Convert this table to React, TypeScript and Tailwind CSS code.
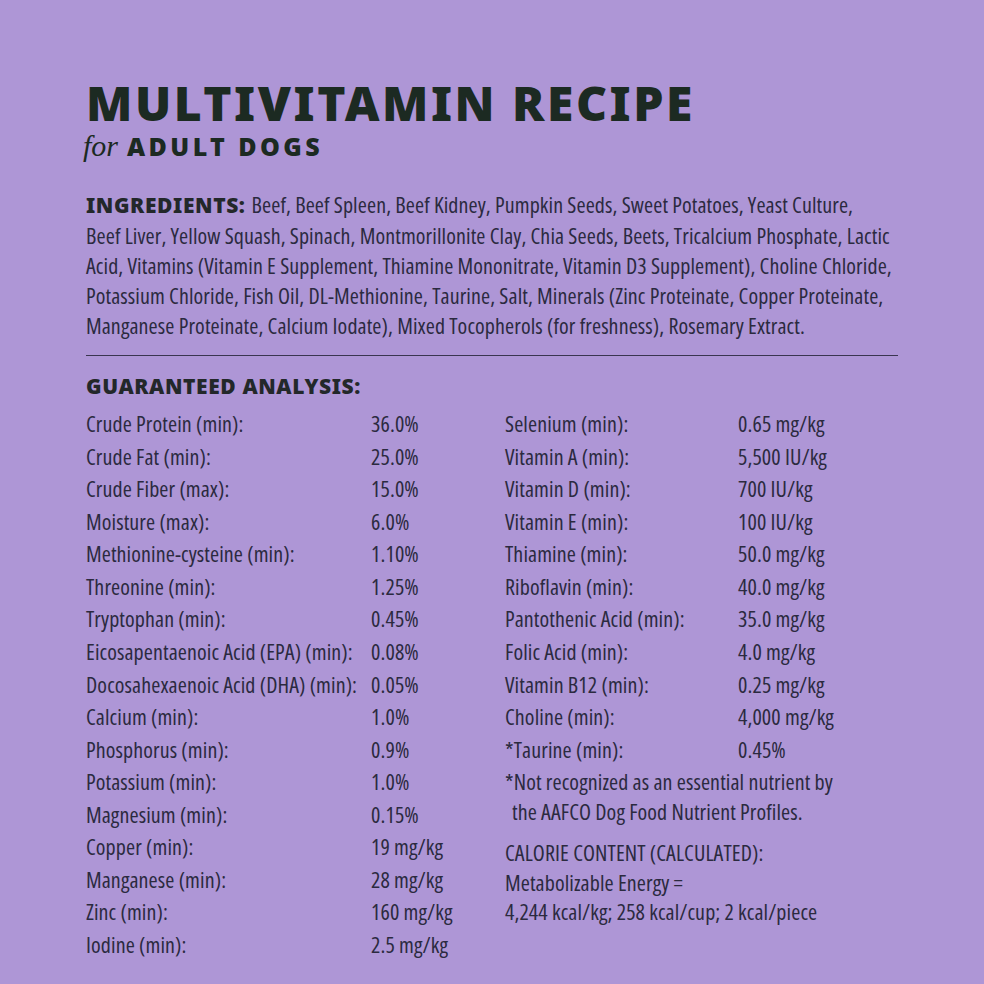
const ingredientLines = [
	'Beef Liver, Yellow Squash, Spinach, Montmorillonite Clay, Chia Seeds, Beets, Tricalcium Phosphate, Lactic',
	'Acid, Vitamins (Vitamin E Supplement, Thiamine Mononitrate, Vitamin D3 Supplement), Choline Chloride,',
	'Potassium Chloride, Fish Oil, DL-Methionine, Taurine, Salt, Minerals (Zinc Proteinate, Copper Proteinate,',
	'Manganese Proteinate, Calcium Iodate), Mixed Tocopherols (for freshness), Rosemary Extract.',
];

const leftRows: [string, string][] = [
	['Crude Protein (min):', '36.0%'],
	['Crude Fat (min):', '25.0%'],
	['Crude Fiber (max):', '15.0%'],
	['Moisture (max):', '6.0%'],
	['Methionine-cysteine (min):', '1.10%'],
	['Threonine (min):', '1.25%'],
	['Tryptophan (min):', '0.45%'],
	['Eicosapentaenoic Acid (EPA) (min):', '0.08%'],
	['Docosahexaenoic Acid (DHA) (min):', '0.05%'],
	['Calcium (min):', '1.0%'],
	['Phosphorus (min):', '0.9%'],
	['Potassium (min):', '1.0%'],
	['Magnesium (min):', '0.15%'],
	['Copper (min):', '19 mg/kg'],
	['Manganese (min):', '28 mg/kg'],
	['Zinc (min):', '160 mg/kg'],
	['Iodine (min):', '2.5 mg/kg'],
];

const rightRows: [string, string][] = [
	['Selenium (min):', '0.65 mg/kg'],
	['Vitamin A (min):', '5,500 IU/kg'],
	['Vitamin D (min):', '700 IU/kg'],
	['Vitamin E (min):', '100 IU/kg'],
	['Thiamine (min):', '50.0 mg/kg'],
	['Riboflavin (min):', '40.0 mg/kg'],
	['Pantothenic Acid (min):', '35.0 mg/kg'],
	['Folic Acid (min):', '4.0 mg/kg'],
	['Vitamin B12 (min):', '0.25 mg/kg'],
	['Choline (min):', '4,000 mg/kg'],
	['*Taurine (min):', '0.45%'],
];

// condensed body face: Open Sans variable, squeezed on its width axis
const body = "font-['Open_Sans',sans-serif] [font-stretch:75%] font-medium tracking-[0.1px]";
const heading = "font-['Noto_Sans',sans-serif] font-black [font-stretch:normal]";

function Rows({ rows, labelWidth }: { rows: [string, string][]; labelWidth: string }) {
	return (
		<div className={`grid ${labelWidth}`}>
			{rows.map(([label, value]) => (
				<div key={label} className="contents">
					<span className="whitespace-nowrap">{label}</span>
					<span className="whitespace-nowrap">{value}</span>
				</div>
			))}
		</div>
	);
}

export default function App() {
	return (
		<div className="min-h-screen w-[984px] bg-[#ae96d6] text-[#2b2a3f]">
			<div className="px-[86px] pt-[77px]">
				<h1 className={`${heading} text-[48px] leading-[52px] tracking-[2.5px] text-[#1c2a22]`}>
					MULTIVITAMIN RECIPE
				</h1>
				<div className="-ml-[3px] mt-[2px] flex h-[30px] items-baseline gap-[9px] text-[#1c2a22]">
					<span className="font-['Liberation_Serif',serif] text-[30px] leading-[30px] italic">for</span>
					<span className={`${heading} text-[25px] leading-[30px] tracking-[3.4px]`}>ADULT DOGS</span>
				</div>

				<div className={`${body} mt-[28px] text-[22px] leading-[30px] whitespace-nowrap`}>
					<div>
						<span className={`${heading} text-[21px] tracking-[0.6px] text-[#23282a]`}>INGREDIENTS: </span>
						Beef, Beef Spleen, Beef Kidney, Pumpkin Seeds, Sweet Potatoes, Yeast Culture,
					</div>
					{ingredientLines.map((line) => (
						<div key={line}>{line}</div>
					))}
				</div>

				<div className="mt-[15px] h-px w-[812px] bg-[#3a3550]" />

				<h2 className={`${heading} mt-[15px] text-[21px] leading-[30px] tracking-[0.6px] text-[#23282a]`}>
					GUARANTEED ANALYSIS:
				</h2>

				<div className={`${body} mt-[6px] flex text-[22px] leading-[32.56px]`}>
					<div className="w-[419px] shrink-0">
						<Rows rows={leftRows} labelWidth="grid-cols-[285px_1fr]" />
					</div>
					<div className="flex flex-col">
						<Rows rows={rightRows} labelWidth="grid-cols-[233px_1fr]" />
						<p className="mt-[1px] leading-[30px] whitespace-nowrap">
							*Not recognized as an essential nutrient by
							<br />
							<span className="pl-[7px]">the AAFCO Dog Food Nutrient Profiles.</span>
						</p>
						<p className="mt-[12px] leading-[29.5px] whitespace-nowrap">
							CALORIE CONTENT (CALCULATED):
							<br />
							Metabolizable Energy =
							<br />
							4,244 kcal/kg; 258 kcal/cup; 2 kcal/piece
						</p>
					</div>
				</div>
			</div>
		</div>
	);
}
